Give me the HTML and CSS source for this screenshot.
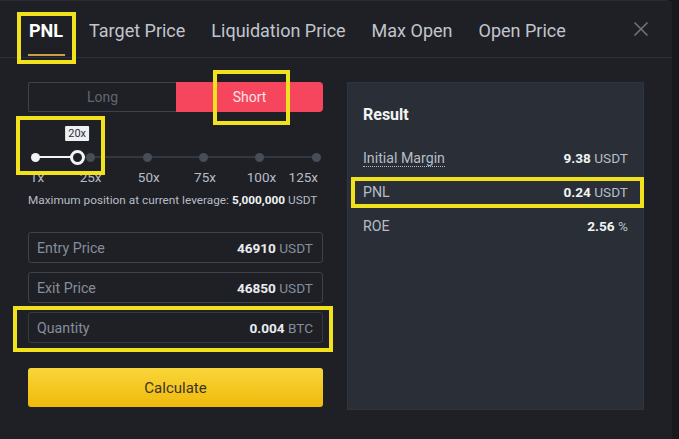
FILE: index.html
```html
<!DOCTYPE html>
<html lang="en">
<head>
<meta charset="utf-8">
<title>PNL Calculator</title>
<link rel="stylesheet" href="styles.css">
</head>
<body>
<div class="modal">
  <div class="header">
    <div class="tabs">
      <div class="tab active">PNL</div>
      <div class="tab">Target Price</div>
      <div class="tab">Liquidation Price</div>
      <div class="tab">Max Open</div>
      <div class="tab">Open Price</div>
    </div>
    <div class="close">
      <svg width="16" height="16" viewBox="0 0 16 16"><path d="M1.5 1.5 L14.5 14.5 M14.5 1.5 L1.5 14.5" stroke="#6b7280" stroke-width="1.6" fill="none"/></svg>
    </div>
  </div>
  <div class="content">
    <div class="left">
      <div class="toggle">
        <div class="side long">Long</div>
        <div class="side short">Short</div>
      </div>
      <div class="leverage">
        <div class="slider">
          <div class="tip">20x</div>
          <div class="track"></div>
          <div class="track-active"></div>
          <div class="dot dot-on" style="left:0%"></div>
          <div class="dot" style="left:19.6%"></div>
          <div class="dot" style="left:40%"></div>
          <div class="dot" style="left:60%"></div>
          <div class="dot" style="left:80%"></div>
          <div class="dot" style="left:100%"></div>
          <div class="handle" style="left:15%"></div>
        </div>
        <div class="marks">
          <span class="mk" style="left:0.7%">1x</span>
          <span class="mk" style="left:19.8%">25x</span>
          <span class="mk" style="left:40.5%">50x</span>
          <span class="mk" style="left:60.5%">75x</span>
          <span class="mk" style="left:80.6%">100x</span>
          <span class="mk" style="left:95.5%">125x</span>
        </div>
        <div class="maxpos">Maximum position at current leverage: <b>5,000,000</b> USDT</div>
      </div>
      <div class="fields">
        <div class="field"><span class="flabel">Entry Price</span><span class="fval"><b>46910</b> USDT</span></div>
        <div class="field"><span class="flabel">Exit Price</span><span class="fval"><b>46850</b> USDT</span></div>
        <div class="field qty"><span class="flabel">Quantity</span><span class="fval"><b>0.004</b> BTC</span></div>
      </div>
      <button class="calc">Calculate</button>
    </div>
    <div class="result">
      <div class="rtitle">Result</div>
      <div class="rows">
        <div class="row"><span class="rlabel dotted">Initial Margin</span><span class="rval"><b>9.38</b> USDT</span></div>
        <div class="row"><span class="rlabel">PNL</span><span class="rval"><b>0.24</b> USDT</span></div>
        <div class="row"><span class="rlabel">ROE</span><span class="rval"><b>2.56</b> %</span></div>
      </div>
    </div>
  </div>
</div>
<div class="mark m-pnl"></div>
<div class="mark m-short"></div>
<div class="mark m-slider"></div>
<div class="mark m-qty"></div>
<div class="mark m-res"></div>
</body>
</html>
```
FILE: styles.css
```css
* { box-sizing: border-box; }
html, body { margin: 0; padding: 0; }
body {
  width: 679px;
  height: 439px;
  background: #18191d;
  font-family: Roboto, "Liberation Sans", Arial, sans-serif;
  color: #eaecef;
  overflow: hidden;
  position: relative;
}
.modal {
  width: 672px;
  height: 439px;
  background: #1f2025;
  border-top-right-radius: 6px;
  border-top: 1px solid #2a2c32;
}
.header {
  height: 57px;
  display: flex;
  align-items: stretch;
  border-bottom: 1px solid #2c2f35;
  padding-left: 29px;
  padding-right: 23px;
}
.tabs {
  display: flex;
  gap: 26px;
}
.tab {
  font-size: 18px;
  line-height: 22px;
  padding-top: 19px;
  color: #c1c5cc;
  position: relative;
}
.tab.active {
  color: #ffffff;
  font-weight: 700;
}
.tab.active::after {
  content: "";
  position: absolute;
  left: -1px;
  right: -2px;
  bottom: 1px;
  height: 2px;
  background: #c8a049;
}
.close {
  margin-left: auto;
  padding-top: 20px;
}
.content {
  display: flex;
  gap: 24px;
  padding: 24px 0 0 28px;
}
.left {
  width: 295px;
  display: flex;
  flex-direction: column;
}
.toggle {
  display: flex;
  height: 30px;
}
.side {
  flex: 1;
  display: flex;
  align-items: center;
  justify-content: center;
  font-size: 14px;
}
.long {
  border: 1px solid #3d424b;
  border-right: none;
  color: #5e6673;
  border-radius: 2px 0 0 2px;
}
.short {
  background: #f6465d;
  color: #fbe3e6;
  border-radius: 0 4px 4px 0;
}
.leverage {
  margin-top: 14px;
}
.slider {
  position: relative;
  height: 43px;
  margin: 0 7px;
}
.tip {
  position: absolute;
  left: 15%;
  top: 0;
  transform: translateX(-50%);
  background: #eef0f2;
  color: #2b2f36;
  font-size: 11px;
  line-height: 15px;
  padding: 0 3px;
  border-radius: 1px;
}
.track {
  position: absolute;
  left: 0; right: 0;
  top: 30px;
  height: 2px;
  background: #33373e;
}
.track-active {
  position: absolute;
  left: 0;
  width: 15%;
  top: 30px;
  height: 2px;
  background: #f2f3f5;
}
.dot {
  position: absolute;
  top: 31px;
  width: 9px;
  height: 9px;
  margin: -4.5px 0 0 -4.5px;
  border-radius: 50%;
  background: #474d57;
}
.dot-on {
  background: #f2f3f5;
}
.handle {
  position: absolute;
  top: 31px;
  width: 15px;
  height: 15px;
  margin: -7.5px 0 0 -7.5px;
  border-radius: 50%;
  border: 3px solid #f2f3f5;
  background: #1f2025;
}
.marks {
  position: relative;
  height: 16px;
  margin: 0 7px;
  font-size: 13.5px;
  line-height: 16px;
  color: #b7bdc6;
}
.mk {
  position: absolute;
  top: 0;
  transform: translateX(-50%);
  white-space: nowrap;
}
.maxpos {
  margin-top: 8px;
  font-size: 11.8px;
  line-height: 14px;
  color: #b7bdc6;
  white-space: nowrap;
}
.maxpos b { color: #f2f3f5; }
.fields {
  margin-top: 25px;
  display: flex;
  flex-direction: column;
  gap: 9px;
}
.field {
  height: 31px;
  border: 1px solid #3d424b;
  border-radius: 3px;
  display: flex;
  align-items: center;
  justify-content: space-between;
  padding: 0 9px 0 8px;
  font-size: 14.2px;
}
.field.qty { border-color: #343c3a; }
.flabel { color: #848e9c; }
.fval { color: #848e9c; font-size: 13.6px; }
.fval b { color: #eaecef; font-weight: 700; }
.calc {
  margin-top: 25px;
  height: 39px;
  width: 295px;
  border: none;
  border-radius: 3px;
  background: linear-gradient(180deg, #f9d63a 0%, #f0b90b 100%);
  color: #3a3424;
  font-family: inherit;
  font-size: 15px;
}
.result {
  width: 297px;
  height: 328px;
  background: #2a2f37;
  border: 1px solid #2f353e;
  padding: 22px 15px 0 15px;
}
.rtitle {
  font-size: 16px;
  font-weight: 700;
  line-height: 20px;
  color: #f2f3f5;
}
.rows {
  margin-top: 23px;
  display: flex;
  flex-direction: column;
  gap: 14px;
}
.row {
  height: 20px;
  display: flex;
  align-items: center;
  justify-content: space-between;
  font-size: 14.2px;
}
.rlabel { color: #b7bdc6; }
.dotted {
  border-bottom: 1px dotted #b7bdc6;
  line-height: 16px;
}
.rval { color: #b7bdc6; font-size: 13.6px; }
.rval b { color: #f2f3f5; font-weight: 700; }
.mark {
  position: absolute;
  border: 4px solid #f2e21d;
  pointer-events: none;
}
.m-pnl { left: 17px; top: 12px; width: 59px; height: 52px; }
.m-short { left: 213px; top: 70px; width: 77px; height: 55px; }
.m-slider { left: 16px; top: 116px; width: 89px; height: 59px; }
.m-qty { left: 13px; top: 306px; width: 320px; height: 46px; }
.m-res { left: 351px; top: 177px; width: 293px; height: 31px; }
```
